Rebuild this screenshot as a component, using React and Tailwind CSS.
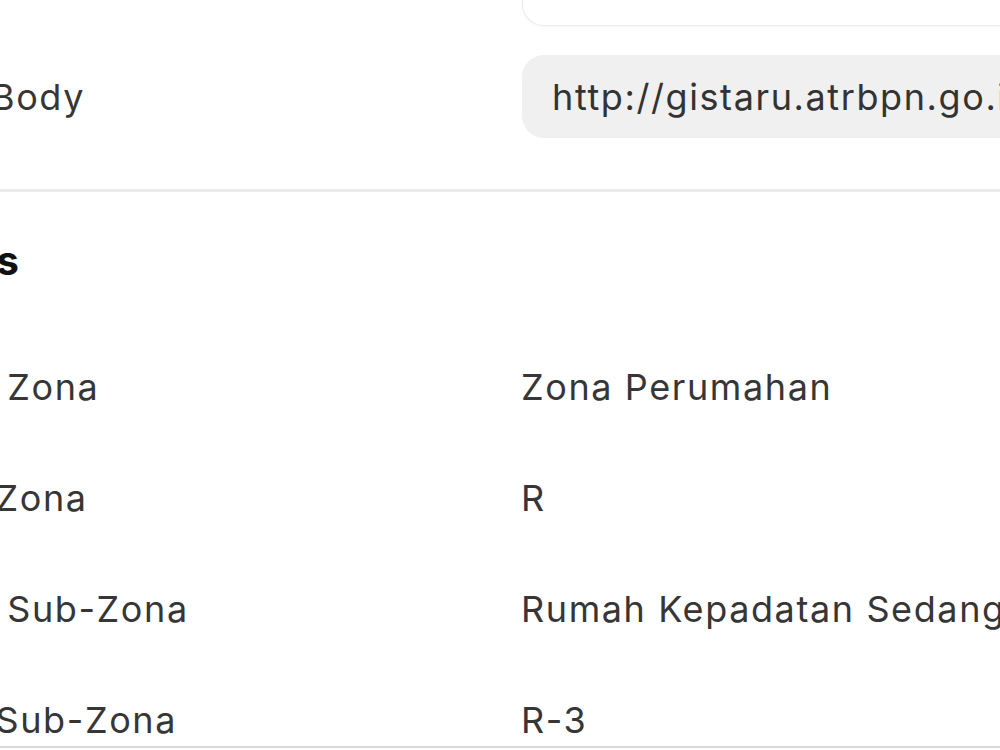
export default function App() {
  const rows = [
    ["Nama Zona", "Zona Perumahan"],
    ["Kode Zona", "R"],
    ["Nama Sub-Zona", "Rumah Kepadatan Sedang"],
    ["Kode Sub-Zona", "R-3"],
  ];
  return (
    <div className="w-[1000px] h-[750px] overflow-hidden bg-white text-[#363636] tracking-[1.6px] font-['Inter','Noto_Sans',sans-serif]">
      <section className="border-b-[3px] border-[#ececec] pb-[51px]">
        <div className="ml-[522px] -mr-[40px] h-[26px] rounded-b-[22px] border-x border-b border-[#ececec] bg-white shadow-[0_1px_3px_rgba(0,0,0,0.04)]" />
        <div className="mt-[29px] flex items-center">
          <div className="w-[522px] shrink-0 -ml-[9px] text-[36px] leading-[44px] whitespace-nowrap">
            Body
          </div>
          <div className="ml-[9px] flex h-[83px] flex-1 items-center overflow-hidden whitespace-nowrap rounded-l-[22px] bg-[#f0f0f0] pl-[30px] text-[36px] leading-[44px] text-[#333333]">
            http://gistaru.atrbpn.go.id/arcgis/rest/services
          </div>
        </div>
      </section>
      <section className="pt-[46px]">
        <h2 className="-ml-[119px] text-[40px] leading-[46px] font-bold tracking-[0.5px] text-[#111111] whitespace-nowrap">
          Details
        </h2>
        <div className="mt-[81px] flex flex-col gap-[67px]">
          {rows.map(([label, value]) => (
            <div key={label} className="flex items-center text-[36px] leading-[44px] whitespace-nowrap">
              <div className="w-[632px] shrink-0 -ml-[110px] overflow-hidden">{label}</div>
              <div className="-ml-[1px]">{value}</div>
            </div>
          ))}
        </div>
        <div className="mt-[4px] border-t-2 border-[#d9d9d9]" />
      </section>
    </div>
  );
}
